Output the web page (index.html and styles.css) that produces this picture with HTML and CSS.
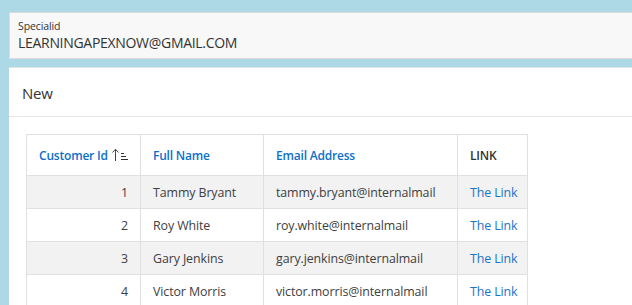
FILE: index.html
```html
<!DOCTYPE html>
<html>
<head>
<meta charset="utf-8">
<link rel="stylesheet" href="styles.css">
</head>
<body>
<div class="page">
  <div class="field-card">
    <div class="field-label">Specialid</div>
    <div class="field-value">LEARNINGAPEXNOW@GMAIL.COM</div>
  </div>
  <div class="region">
    <div class="region-header">New</div>
    <div class="region-body">
      <table class="report">
        <thead>
          <tr>
            <th class="col-id sortable">Customer Id <svg class="sort-icon" width="17" height="14" viewBox="0 0 17 14"><path d="M4.5 13V1.5M1.5 4.5L4.5 1.2L7.5 4.5" fill="none" stroke="#444" stroke-width="1"/><path d="M10 5.5h3M10 8.5h5M10 11.5h7" stroke="#333" stroke-width="1"/></svg></th>
            <th class="col-name sortable">Full Name</th>
            <th class="col-email sortable">Email Address</th>
            <th class="col-link">LINK</th>
          </tr>
        </thead>
        <tbody>
          <tr><td class="num">1</td><td>Tammy Bryant</td><td>tammy.bryant@internalmail</td><td><a href="#">The Link</a></td></tr>
          <tr><td class="num">2</td><td>Roy White</td><td>roy.white@internalmail</td><td><a href="#">The Link</a></td></tr>
          <tr><td class="num">3</td><td>Gary Jenkins</td><td>gary.jenkins@internalmail</td><td><a href="#">The Link</a></td></tr>
          <tr><td class="num">4</td><td>Victor Morris</td><td>victor.morris@internalmail</td><td><a href="#">The Link</a></td></tr>
        </tbody>
      </table>
    </div>
  </div>
</div>
</body>
</html>
```
FILE: styles.css
```css
html, body {
  margin: 0;
  padding: 0;
  background: #add8e6;
  overflow: hidden;
}
body {
  font-family: "Open Sans", "Noto Sans", sans-serif;
  color: #333;
}
.page {
  padding: 12px 0 0 9px;
  display: flex;
  flex-direction: column;
  gap: 8px;
}
.field-card {
  background: #f8f8f8;
  border: 1px solid #dcdcdc;
  border-right: none;
  padding: 6px 0 0 8px;
  box-sizing: border-box;
  height: 47px;
}
.field-label {
  font-size: 10.5px;
  color: #333;
  line-height: 14px;
  letter-spacing: -0.1px;
}
.field-value {
  font-size: 14px;
  color: #333;
  line-height: 20px;
  letter-spacing: -0.3px;
}
.region {
  background: #fff;
  border-top: 1px solid #e2e2e2;
}
.region-header {
  height: 49px;
  box-sizing: border-box;
  padding: 15px 0 0 13px;
  font-size: 15px;
  color: #333;
  border-bottom: 1px solid #e6e6e6;
  letter-spacing: -0.2px;
}
.region-body {
  padding: 17px 0 0 17px;
}
.report {
  border-collapse: collapse;
  table-layout: fixed;
  width: 502px;
  font-size: 12.4px;
  letter-spacing: -0.1px;
}
.report th, .report td {
  border: 1px solid #e0e0e0;
  padding: 0 12px 0 12px;
  text-align: left;
  white-space: nowrap;
  overflow: visible;
}
.report th {
  height: 40px;
  font-weight: 600;
  font-size: 12px;
  letter-spacing: -0.2px;
  color: #333;
  background: #fff;
}
.report th.sortable {
  color: #0b6fcb;
}
.report td {
  height: 32px;
  color: #404040;
}
.report tbody tr:nth-child(odd) td {
  background: #f2f2f2;
}
.col-id { width: 89px; }
.col-name { width: 98px; }
.col-email { width: 169px; }
.col-link { width: 45px; }
.report td.num {
  text-align: right;
}
.sort-icon {
  vertical-align: -2px;
}
.report a {
  color: #1a73c8;
  text-decoration: none;
}
```
